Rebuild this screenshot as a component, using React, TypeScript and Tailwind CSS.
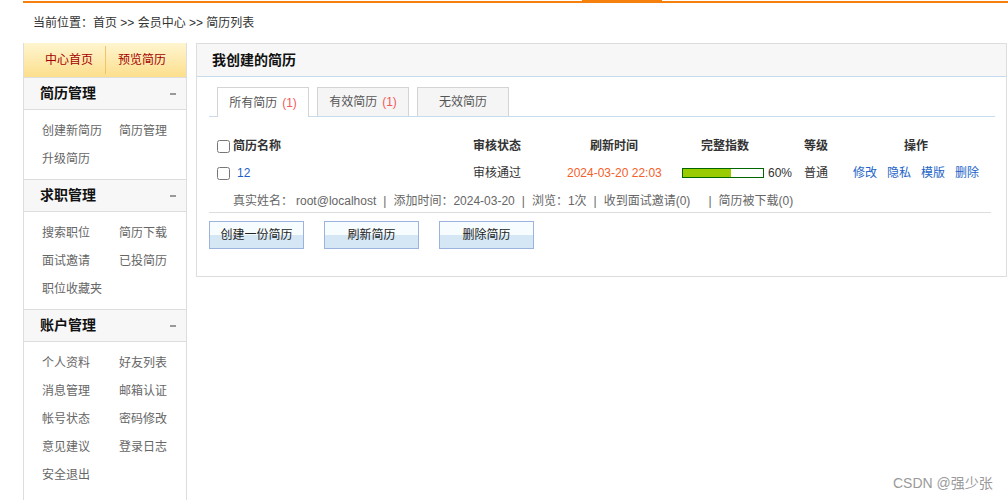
import React from "react";

const SideSection = ({ title, items }: { title: string; items: string[] }) => {
    return (
        <div className="border-t border-[#dddddd]">
            <div className="h-[32px] bg-[#f7f7f7] border-b border-[#dddddd] flex items-center justify-between pl-[16px] pr-[10px]">
                <span className="text-[14px] font-bold text-[#111]">{title}</span>
                <span className="w-[6px] h-[2px] bg-[#999]" />
            </div>
            <div className="grid grid-cols-[77px_1fr] pl-[18px] pt-[7px] pb-[6px]">
                {items.map((item) => (
                    <div key={item} className="h-[28px] flex items-center text-[12px] text-[#666]">{item}</div>
                ))}
            </div>
        </div>
    );
};

const Sidebar = () => {
    return (
        <div className="w-[164px] shrink-0 border-x border-[#dddddd] min-h-[470px]">
            <div className="h-[34px] bg-gradient-to-b from-[#fff5cf] to-[#fcdf8c] flex items-center pl-[21px] text-[12px] text-[#a50000]">
                <span>中心首页</span>
                <span className="mx-[12px] w-px h-[28px] bg-[#efc46c]" />
                <span>预览简历</span>
            </div>
            <SideSection title="简历管理" items={["创建新简历", "简历管理", "升级简历"]} />
            <SideSection title="求职管理" items={["搜索职位", "简历下载", "面试邀请", "已投简历", "职位收藏夹"]} />
            <SideSection
                title="账户管理"
                items={["个人资料", "好友列表", "消息管理", "邮箱认证", "帐号状态", "密码修改", "意见建议", "登录日志", "安全退出"]}
            />
        </div>
    );
};

const Tab = ({ label, count, active }: { label: string; count?: number; active?: boolean }) => {
    return (
        <div
            className={
                active
                    ? "w-[92px] h-[30px] -mb-px border border-b-0 border-[#d4d4d4] bg-white flex items-center justify-center text-[12px] text-[#555]"
                    : "w-[92px] h-[29px] border border-b-0 border-[#d4d4d4] bg-[#f5f5f5] flex items-center justify-center text-[12px] text-[#555]"
            }
        >
            <span>{label}</span>
            {count !== undefined && <span className="ml-[5px] text-[#f25a5a]">({count})</span>}
        </div>
    );
};

const Sep = () => <span className="px-[7px] text-[#666]">|</span>;

const ResumePanel = () => {
    return (
        <div className="flex-1 ml-[9px] mr-[1px] self-start border border-[#dddddd]">
            <div className="h-[33px] bg-[#f7f7f7] border-b border-[#c8dbed] flex items-center pl-[15px] text-[14px] font-bold text-[#111]">
                我创建的简历
            </div>
            <div className="pl-[12px] pr-[11px] pt-[10px] pb-[27px]">
                <div className="flex items-end gap-[8px] pl-[8px] border-b border-[#c8dbed]">
                    <Tab label="所有简历" count={1} active />
                    <Tab label="有效简历" count={1} />
                    <Tab label="无效简历" />
                </div>

                {/* table head */}
                <div className="mt-[15px] h-[28px] pl-[8px] flex items-center text-[12px] font-bold text-[#333]">
                    <div className="w-[256px] flex items-center">
                        <input type="checkbox" className="w-[13px] h-[13px] m-0" />
                        <span className="ml-[3px]">简历名称</span>
                    </div>
                    <div className="w-[117px]">审核状态</div>
                    <div className="w-[111px]">刷新时间</div>
                    <div className="w-[103px]">完整指数</div>
                    <div className="w-[100px]">等级</div>
                    <div>操作</div>
                </div>

                {/* row */}
                <div className="h-[26px] pl-[8px] flex items-center text-[12px] text-[#333]">
                    <div className="w-[256px] flex items-center">
                        <input type="checkbox" className="w-[13px] h-[13px] m-0" />
                        <span className="ml-[7px] text-[#1f5fc9]">12</span>
                    </div>
                    <div className="w-[94px]">审核通过</div>
                    <div className="w-[115px] text-[#f4602a]">2024-03-20 22:03</div>
                    <div className="w-[122px] flex items-center">
                        <div className="w-[82px] h-[10px] border border-[#006600] bg-white">
                            <div className="h-full bg-[#99cc00]" style={{ width: "60%" }} />
                        </div>
                        <span className="ml-[4px]">60%</span>
                    </div>
                    <div className="w-[49px]">普通</div>
                    <div className="flex gap-[10px] text-[#2264c8]">
                        <span>修改</span>
                        <span>隐私</span>
                        <span>模版</span>
                        <span>删除</span>
                    </div>
                </div>

                {/* details */}
                <div className="mt-[3px] mr-[4px] h-[24px] pl-[24px] flex items-center border-b border-[#dddddd] text-[12px] text-[#666] whitespace-nowrap">
                    <span>真实姓名：</span>
                    <span className="ml-[3px]">root@localhost</span>
                    <Sep />
                    <span>添加时间：2024-03-20</span>
                    <Sep />
                    <span>浏览：1次</span>
                    <Sep />
                    <span>收到面试邀请(0)</span>
                    <span className="pl-[18px] pr-[7px]">|</span>
                    <span>简历被下载(0)</span>
                </div>

                <div className="mt-[8px] flex gap-[20px]">
                    {["创建一份简历", "刷新简历", "删除简历"].map((t) => (
                        <button
                            key={t}
                            className="w-[95px] h-[28px] border border-[#9db3dd] bg-gradient-to-b from-[#f7fcff] from-50% to-[#d5e7f5] to-50% text-[12px] text-[#222]"
                        >
                            {t}
                        </button>
                    ))}
                </div>
            </div>
        </div>
    );
};

const App = () => {
    return (
        <div className="relative w-[1008px] h-[500px] overflow-hidden bg-white font-['Liberation_Sans','Noto_Sans_CJK_SC',sans-serif]">
            <div className="flex items-start pl-[23px]">
                <div className="w-[559px] h-[2px] mt-px bg-[#f5800c]" />
                <div className="w-[80px] h-[3px] bg-[#f5800c]" />
                <div className="flex-1 h-[2px] mt-px bg-[#f5800c]" />
            </div>
            <div className="h-[40px] flex items-center pl-[33px] text-[12px] text-[#333]">
                当前位置：首页 &gt;&gt; 会员中心 &gt;&gt; 简历列表
            </div>
            <div className="flex pl-[23px]">
                <Sidebar />
                <ResumePanel />
            </div>
            <div className="absolute left-[893px] top-[473px] text-[14px] text-[#9a9a9a]">CSDN @强少张</div>
        </div>
    );
};

export default App;
